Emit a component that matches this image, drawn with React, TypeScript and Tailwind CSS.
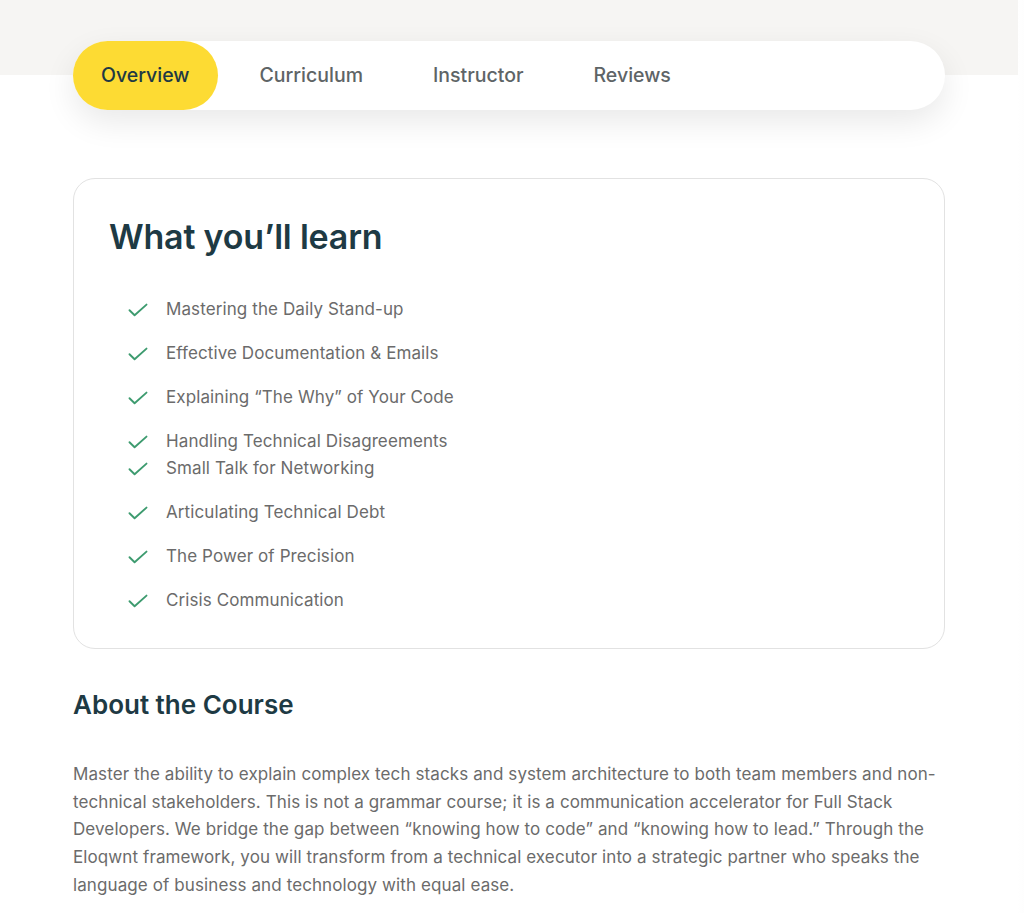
import { useState } from "react";

const tabs = ["Overview", "Curriculum", "Instructor", "Reviews"];

const outcomes = [
  { label: "Mastering the Daily Stand-up" },
  { label: "Effective Documentation & Emails" },
  { label: "Explaining \u201cThe Why\u201d of Your Code" },
  { label: "Handling Technical Disagreements", tight: true },
  { label: "Small Talk for Networking" },
  { label: "Articulating Technical Debt" },
  { label: "The Power of Precision" },
  { label: "Crisis Communication" },
];

function CheckIcon() {
  return (
    <svg width="20" height="14" viewBox="0 0 20 14" fill="none" className="shrink-0">
      <path d="M1.5 7.2 6.6 12.2 18.5 1.6" stroke="#3d9b6f" strokeWidth="1.9" strokeLinecap="round" strokeLinejoin="round" />
    </svg>
  );
}

export default function App() {
  const [active, setActive] = useState("Overview");

  return (
    <div className="flex min-h-[913px] bg-white font-['Inter',sans-serif]">
      <div className="flex-1">
        <div className="h-[75px] bg-[#f6f5f3]" />

        <div className="mx-[73px] w-[872px]">
          <nav className="-mt-[34px] flex h-[69px] items-center gap-[14px] rounded-full bg-white shadow-[0_12px_32px_rgba(0,0,0,0.09)]">
            {tabs.map((t) => (
              <button
                key={t}
                onClick={() => setActive(t)}
                className={
                  t === active
                    ? "flex h-full items-center rounded-full bg-[#fddb33] px-7 text-[19.5px] font-medium text-[#1f3944]"
                    : "flex h-full items-center rounded-full px-7 text-[19.5px] font-medium text-[#5e6466]"
                }
              >
                {t}
              </button>
            ))}
          </nav>

          <section className="mt-[68px] rounded-[22px] border border-[#e2e2e2] px-[35px] pt-[37px] pb-[34px]">
            <h2 className="text-[34px] leading-[41px] font-semibold tracking-[-0.2px] text-[#1e3a44]">
              What you’ll learn
            </h2>
            <ul className="mt-[39px] pl-[19px]">
              {outcomes.map((o, i) => (
                <li
                  key={o.label}
                  className={
                    i === 0 || outcomes[i - 1].tight
                      ? "flex h-[27px] items-center gap-[18px] text-[17px] text-[#6b6b6b]"
                      : "mt-[17px] flex h-[27px] items-center gap-[18px] text-[17px] text-[#6b6b6b]"
                  }
                >
                  <CheckIcon />
                  <span className="tracking-[0.1px]">{o.label}</span>
                </li>
              ))}
            </ul>
          </section>

          <h3 className="mt-[38px] text-[26px] leading-[36px] font-semibold text-[#1e3a44]">About the Course</h3>
          <p className="mt-[38px] text-[17px] leading-[27.7px] tracking-[0.1px] text-[#6b6b6b]">
            Master the ability to explain complex tech stacks and system architecture to both team members and non-technical
            stakeholders. This is not a grammar course; it is a communication accelerator for Full Stack Developers. We bridge
            the gap between “knowing how to code” and “knowing how to lead.” Through the Eloqwnt framework, you will transform
            from a technical executor into a strategic partner who speaks the language of business and technology with equal
            ease.
          </p>
        </div>
      </div>
      <div className="w-[40px] shrink-0 bg-gradient-to-r from-white to-[#f2f2f2]" />
    </div>
  );
}
